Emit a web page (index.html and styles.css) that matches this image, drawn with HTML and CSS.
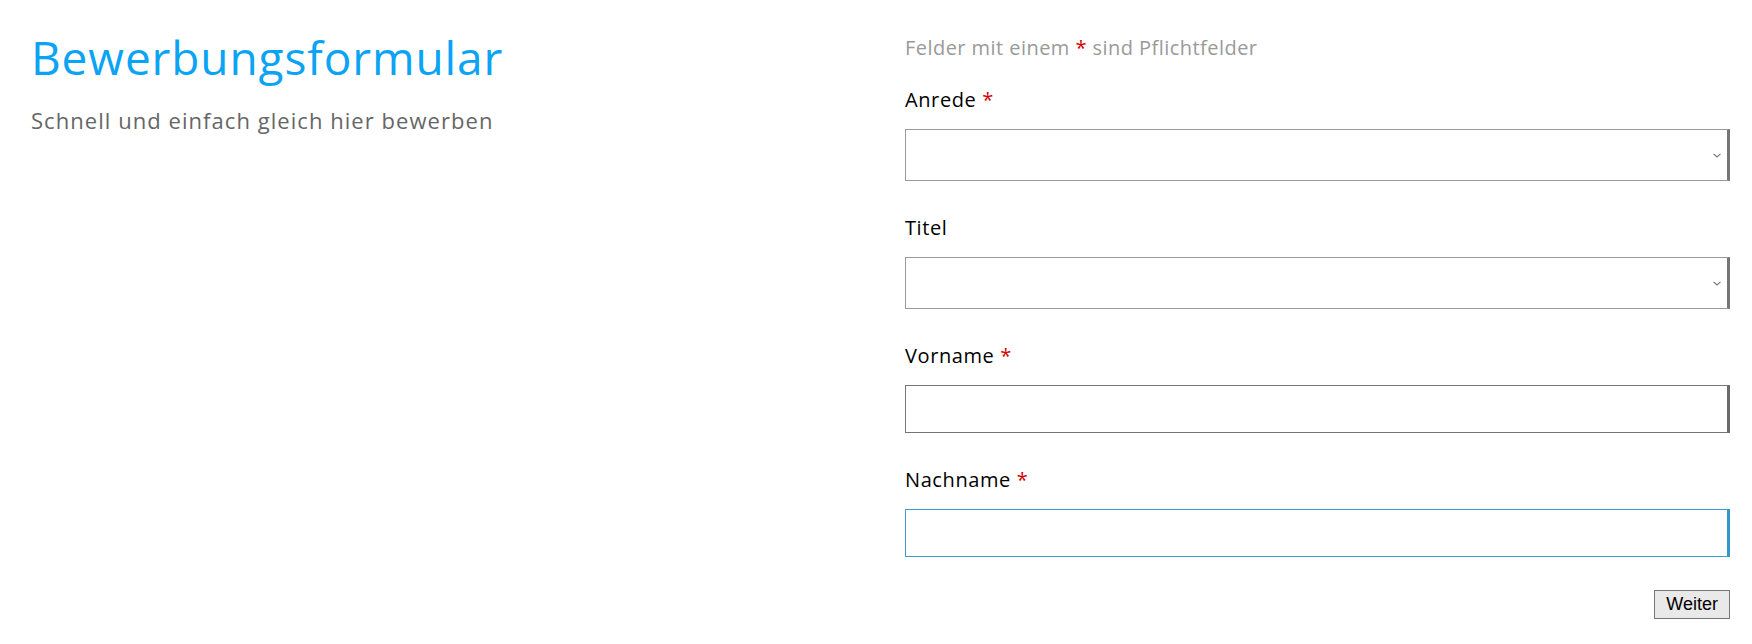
FILE: index.html
```html
<!DOCTYPE html>
<html lang="de">
<head>
<meta charset="utf-8">
<title>Bewerbungsformular</title>
<link rel="stylesheet" href="styles.css">
</head>
<body>
<main class="page">
  <section class="intro">
    <h1 class="title">Bewerbungsformular</h1>
    <p class="lead">Schnell und einfach gleich hier bewerben</p>
  </section>
  <form class="form">
    <p class="note">Felder mit einem <span class="req">*</span> sind Pflichtfelder</p>
    <div class="field">
      <label class="label" for="anrede">Anrede <span class="req">*</span></label>
      <div class="select-wrap">
        <select class="select" id="anrede"></select>
        <svg class="chev" width="8" height="5" viewBox="0 0 8 5"><path d="M0.5 0.8 L4 4 L7.5 0.8" fill="none" stroke="#777" stroke-width="1.1"/></svg>
      </div>
    </div>
    <div class="field">
      <label class="label" for="titel">Titel</label>
      <div class="select-wrap">
        <select class="select" id="titel"></select>
        <svg class="chev" width="8" height="5" viewBox="0 0 8 5"><path d="M0.5 0.8 L4 4 L7.5 0.8" fill="none" stroke="#777" stroke-width="1.1"/></svg>
      </div>
    </div>
    <div class="field">
      <label class="label" for="vorname">Vorname <span class="req">*</span></label>
      <input class="input" id="vorname" type="text">
    </div>
    <div class="field">
      <label class="label" for="nachname">Nachname <span class="req">*</span></label>
      <input class="input input-focus" id="nachname" type="text">
    </div>
    <div class="actions">
      <button class="btn" type="button">Weiter</button>
    </div>
  </form>
</main>
</body>
</html>
```
FILE: styles.css
```css
* { box-sizing: border-box; }
html, body { margin: 0; padding: 0; background: #fff; }
body { font-family: "Open Sans", "Liberation Sans", sans-serif; }

.page {
  display: grid;
  grid-template-columns: 1fr 825px;
  padding: 30px 22px 0 31px;
  width: 1752px;
  height: 644px;
}

.title {
  margin: 0;
  font-size: 46px;
  line-height: 1.2;
  font-weight: 500;
  color: #0ba3f4;
  letter-spacing: 0.9px;
}
.lead {
  margin: 20px 0 0;
  font-size: 22px;
  line-height: 30px;
  color: #666;
  letter-spacing: 1.05px;
}

.form { margin: 0; display: flex; flex-direction: column; }
.note {
  margin: 3px 0 22px;
  font-size: 20px;
  line-height: 30px;
  color: #9a9a9a;
  letter-spacing: 0.45px;
}
.req { color: #d10000; }

.field { display: flex; flex-direction: column; margin-bottom: 32px; }
.label {
  display: block;
  font-size: 20px;
  line-height: 30px;
  font-weight: 500;
  color: #000;
  margin-bottom: 14px;
  letter-spacing: 0.6px;
}

.select-wrap { position: relative; }
.select {
  display: block;
  width: 100%;
  height: 52px;
  margin: 0;
  -webkit-appearance: none;
  appearance: none;
  background: #fff;
  border: 1px solid #9a9a9a;
  border-right: 3px solid #767676;
  border-radius: 0;
}
.chev { position: absolute; right: 9px; top: 24px; }

.input {
  display: block;
  width: 100%;
  height: 48px;
  margin: 0;
  border: 1px solid #767676;
  border-right: 3px solid #6a6a6a;
  border-radius: 0;
  background: #fff;
  outline: none;
}
.input-focus {
  border-color: #3f9bc8;
  border-right-color: #3596cc;
}

.actions { display: flex; justify-content: flex-end; margin-top: 1px; }
.btn {
  font-family: "Liberation Sans", Arial, sans-serif;
  font-size: 18px;
  line-height: 21px;
  height: 29px;
  padding: 3px 11px;
  color: #000;
  background: #e9e9e9;
  border: 1px solid #767676;
  border-radius: 0;
}
```
